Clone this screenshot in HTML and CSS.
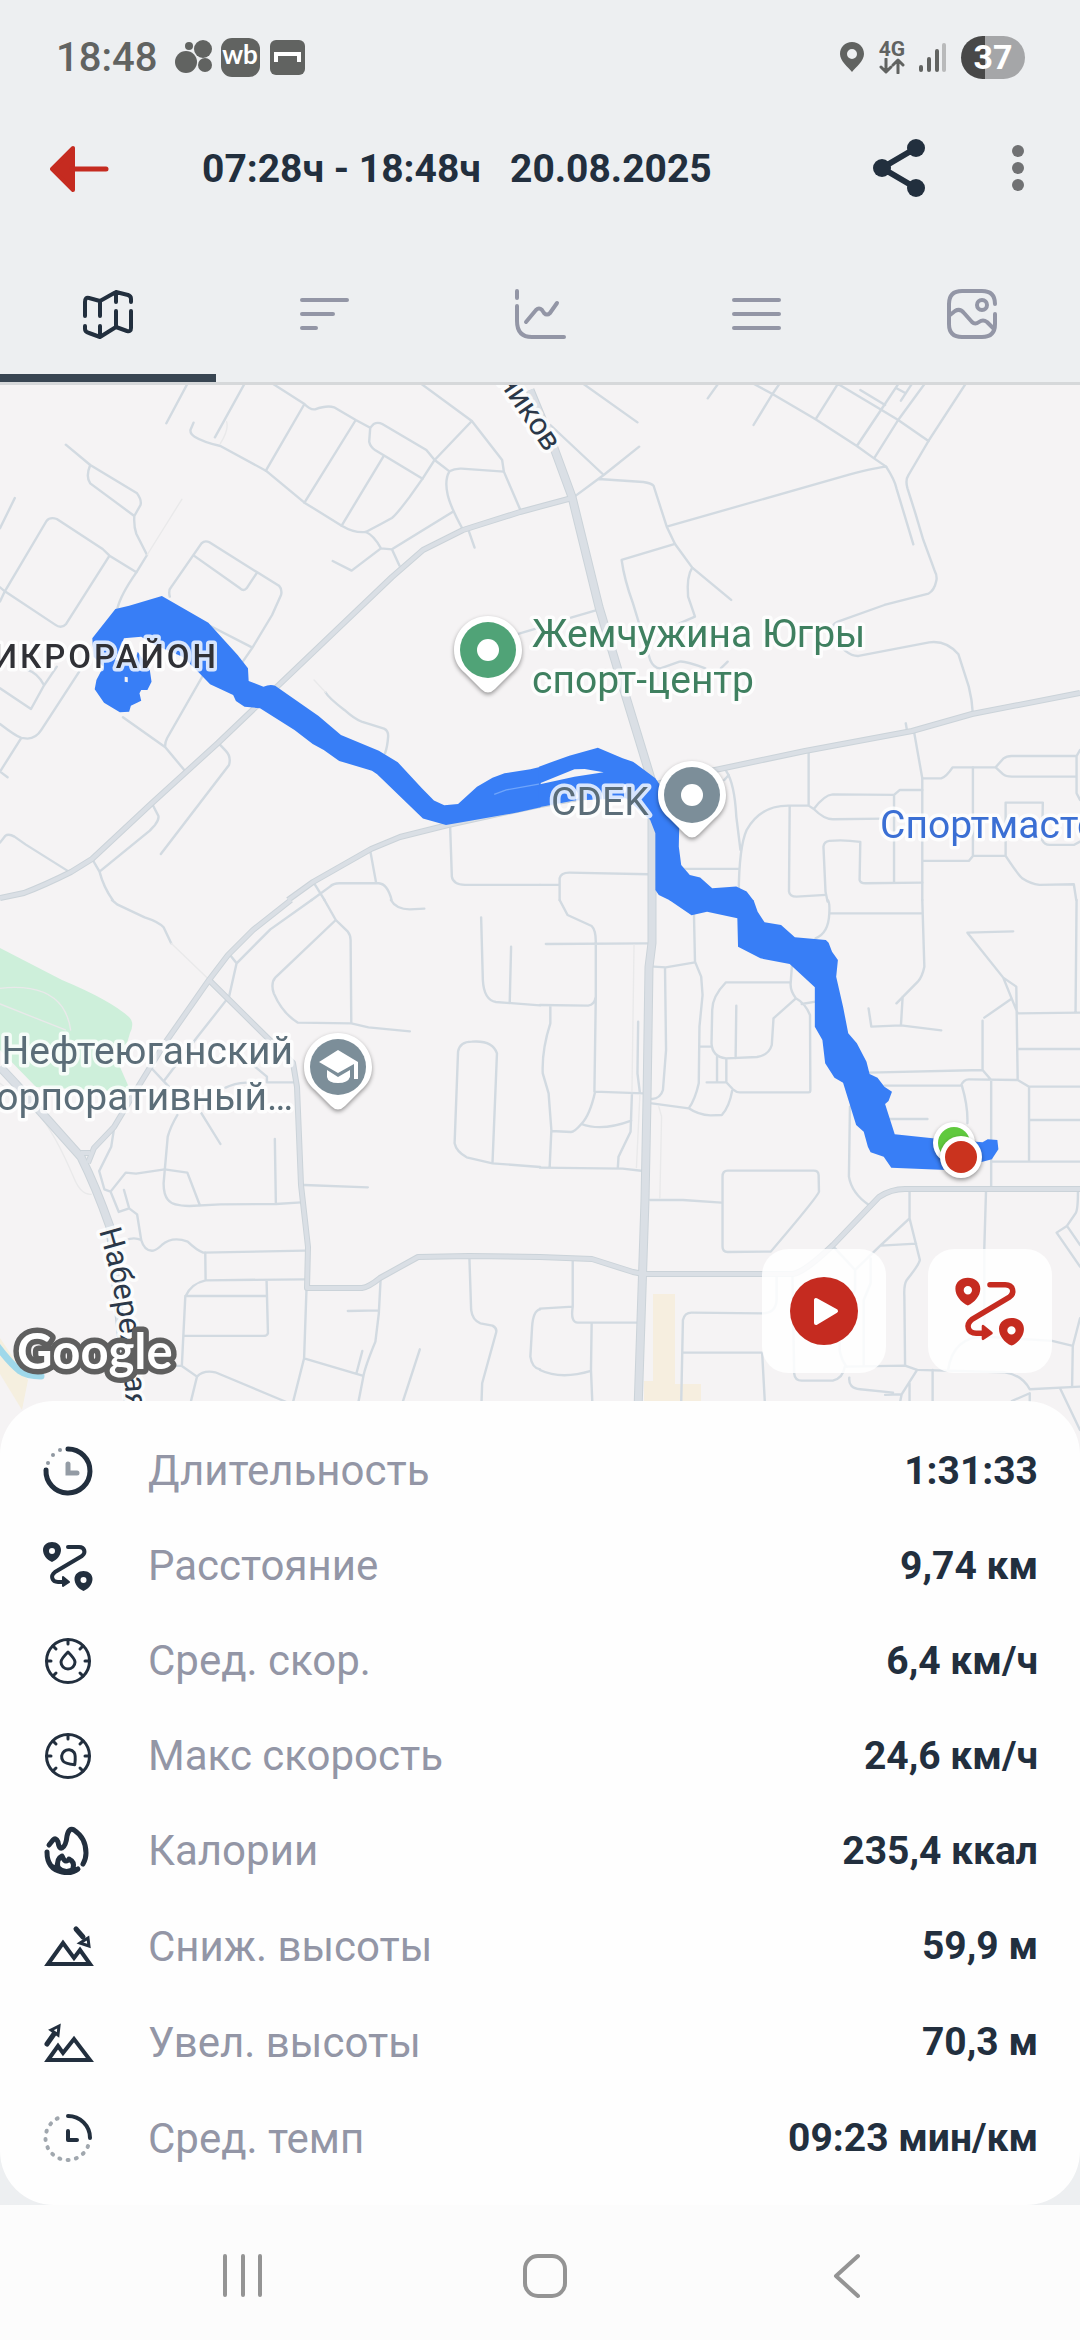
FILE: index.html
```html
<!DOCTYPE html>
<html lang="ru">
<head>
  <meta charset="utf-8">
  <meta name="viewport" content="width=device-width, initial-scale=1">
  <title>Маршрут</title>
  <link rel="stylesheet" href="styles.css">
</head>
<body>
  <!-- shared shapes -->
  <svg class="defs" aria-hidden="true">
    <symbol id="route" viewBox="0 0 52 52">
      <path fill="currentColor" fill-rule="evenodd" d="M10 2C5 2 1 5 1 10c0 5 4 10 9 12 5-2 9-7 9-12 0-5-4-8-9-8zm0 6a3 3 0 1 1 0 6 3 3 0 0 1 0-6zM41.500 31c-5 0-9 3-9 8 0 5 4 10 9 12 5-2 9-7 9-12 0-5-4-8-9-8zm0 6a3 3 0 1 1 0 6 3 3 0 0 1 0-6z"/>
      <path fill="none" stroke="currentColor" stroke-width="4" stroke-linecap="round" stroke-linejoin="round" d="M26 7H37C43 7 44 13 40 16L13 32C8 36 10 42 16 42H23"/>
      <path fill="currentColor" stroke="currentColor" stroke-width="2" stroke-linejoin="round" d="M21 37L27 42L21 46z"/>
    </symbol>
    <symbol id="gauge" viewBox="0 0 52 52">
      <circle cx="26" cy="26" r="21.500" fill="none" stroke="currentColor" stroke-width="3"/>
      <path fill="none" stroke="currentColor" stroke-width="3" stroke-linecap="round" d="M26 5V9M5 26H9M47 26H43M11 11L14 14M41 11L38 14M11 41L14 38M41 41L38 38"/>
    </symbol>
    <symbol id="pin" viewBox="0 0 80 90" overflow="visible">
      <path fill="#fff" d="M40 6C21 6 6 21 6 40C6 50 10 57 17 63L33 79Q40 86 47 79L63 63C70 57 74 50 74 40C74 21 59 6 40 6z"/>
      <circle cx="40" cy="40" r="28" fill="currentColor"/>
    </symbol>
  </svg>

  <header class="status-bar">
    <time class="clock">18:48</time>
    <svg class="status-apps" viewBox="0 0 132 44" aria-hidden="true">
      <g fill="#616361">
        <circle cx="11" cy="24" r="11"/><circle cx="28" cy="11" r="9"/><circle cx="14" cy="8" r="4"/><circle cx="30" cy="27" r="7"/>
        <rect x="46" width="39" height="39" rx="11"/>
        <rect x="95" y="2" width="35" height="35" rx="6"/>
      </g>
      <text class="wb" x="65" y="26" text-anchor="middle">wb</text>
      <path d="M101 24V16H124V24" fill="none" stroke="#fff" stroke-width="4"/>
    </svg>
    <div class="status-right">
      <svg width="26" height="32" viewBox="0 0 26 32" aria-hidden="true"><path fill="#616361" fill-rule="evenodd" d="M13 1C6 1 1 6 1 13C1 20 9 26 13 31C17 26 25 20 25 13C25 6 20 1 13 1zm0 7a5 5 0 1 1 0 10 5 5 0 0 1 0-10z"/></svg>
      <div class="network">
        <span>4G</span>
        <svg width="26" height="16" viewBox="0 0 26 16" aria-hidden="true"><path fill="none" stroke="#616361" stroke-width="3" stroke-linecap="round" stroke-linejoin="round" d="M7 1V13M2 9L7 14L12 9M19 15V3M14 7L19 2L24 7"/></svg>
      </div>
      <svg width="28" height="32" viewBox="0 0 28 32" aria-hidden="true"><g fill="none" stroke="#616361" stroke-width="4" stroke-linecap="round"><path d="M2 26V29M10 18V29M18 10V29"/><path stroke="#b9babb" d="M25 4V29"/></g></svg>
      <div class="battery">37</div>
    </div>
  </header>

  <div class="app-bar">
    <button class="icon-btn back" aria-label="Назад">
      <svg width="60" height="48" viewBox="0 0 60 48"><path fill="#c52b20" stroke="#c52b20" stroke-width="4" stroke-linejoin="round" d="M2 24L23 3V45z"/><path stroke="#c52b20" stroke-width="5" stroke-linecap="round" d="M22 24H56"/></svg>
    </button>
    <h1 class="title">07:28ч - 18:48ч &nbsp; 20.08.2025</h1>
    <button class="icon-btn share" aria-label="Поделиться">
      <svg width="52" height="60" viewBox="0 0 52 60"><path fill="none" stroke="#222f3e" stroke-width="6" d="M43 9L9 29L43 49"/><g fill="#222f3e"><circle cx="43" cy="9" r="9"/><circle cx="9" cy="29" r="9"/><circle cx="43" cy="49" r="9"/></g></svg>
    </button>
    <button class="icon-btn" aria-label="Меню">
      <svg width="24" height="48" viewBox="0 0 24 48"><g fill="#707173"><circle cx="12" cy="6" r="6"/><circle cx="12" cy="23" r="6"/><circle cx="12" cy="40" r="6"/></g></svg>
    </button>
  </div>

  <nav class="tabs">
    <button class="tab active" aria-label="Карта">
      <svg viewBox="0 0 52 52"><path d="M3 28V14Q3 9 7 10L18 13L34 4L46 7Q49 8 49 11V14M49 23V40Q49 44 45 43L34 39L18 49L7 45Q3 44 3 41V38M18 13V28M18 38V49M34 4V14M34 23V39"/></svg>
    </button>
    <button class="tab" aria-label="Список">
      <svg viewBox="0 0 52 52"><path d="M4 12H49M4 26H35M4 40H18"/></svg>
    </button>
    <button class="tab" aria-label="График">
      <svg viewBox="0 0 52 52"><path d="M3 3V10M3 18V33Q3 49 18 49H50M12 34L22 22Q25 19 28 22L30 25Q33 28 36 25L43 15"/></svg>
    </button>
    <button class="tab" aria-label="Данные">
      <svg viewBox="0 0 52 52"><path d="M4 12H49M4 26H49M4 40H49"/></svg>
    </button>
    <button class="tab" aria-label="Фото">
      <svg viewBox="0 0 52 52"><path d="M49 16Q49 3 36 3H16Q3 3 3 16V36Q3 49 16 49H36Q49 49 49 36V26M4 27L9 23Q14 20 18 25L26 34Q29 37 33 34Q37 31 41 34L48 41"/><circle cx="36" cy="17" r="5"/></svg>
    </button>
  </nav>

  <main class="map">
    <svg class="map-canvas" viewBox="0 385 1080 1076" preserveAspectRatio="xMidYMin slice" role="img" aria-label="Карта маршрута">
      <defs>
        <path id="street-2" d="M99 1231Q122 1305 126 1410"/>
      </defs>

      <!-- areas -->
      <path fill="#cdefda" d="M0 948L62 980Q110 1000 129 1017Q135 1023 130 1033L120 1067L131 1092L36 1087L0 1050z"/>
      <path fill="#f5efdf" d="M0 1338L28 1380L22 1410L0 1374z"/>
      <path fill="#f6eedf" d="M653 1294H675V1384H701V1410H644V1381H653z"/>
      <path fill="none" stroke="#9fd8ea" stroke-width="7" stroke-linecap="round" d="M-2 1347Q10 1363 20 1371Q27 1376 41 1376"/>

      <!-- north west -->
      <g class="minor" transform="translate(0 380) scale(.3444 .3333)">
        <path d="M550 0L483 130M716 0L624 172M562 128L553 150Q552 162 565 170Q590 186 640 198L772 272L884 368L992 437Q1030 460 1062 456L1106 432L1138 414Q1150 405 1190 350L1227 296L1262 240L1370 123"/>
        <path d="M775 0L884 72Q900 90 915 88Q950 75 970 82L1033 120L1075 143M1208 0L1370 123L1458 240L1463 275L1510 388M884 72L772 272M1033 120L884 368M1113 230L992 437"/>
        <path d="M1075 143L1085 132Q1097 125 1110 132L1238 210L1262 240L1305 274Q1320 265 1340 266L1463 275M1075 143L1072 185Q1075 200 1090 211L1227 296M1305 274Q1290 300 1300 345Q1308 380 1342 445"/>
        <path d="M1315 395L1138 508L1106 505L1021 572L966 543M1062 456Q1085 465 1106 505M1138 508L1160 557M1360 450L1378 503"/>
        <path d="M191 194L262 255L398 340Q412 360 408 375L390 408Q388 440 396 462L427 525L396 577Q350 645 341 685M262 255Q248 290 262 310L390 408M43 354L0 445"/>
        <path d="M0 665L14 634L135 423Q145 410 165 417L298 507L318 527L396 577M0 622L14 634L160 734Q178 748 192 732L318 527"/>
        <path d="M493 650Q488 630 498 620L585 490Q595 480 608 487L747 577L810 617Q820 628 816 645L790 705L733 803L705 845M563 527L697 625Q708 635 716 625L747 577M605 735L733 803"/>
        <path d="M80 870Q110 880 128 916L90 987L0 925M165 860L128 916M230 875L120 1050Q105 1075 80 1076L62 1074Q45 1068 0 1032M62 1074L0 1175L22 1192"/>
        <path d="M357 1012L480 1102Q478 1090 485 1075L590 885M480 1102L535 1170M633 1088L655 1112Q672 1130 665 1155L467 1422M442 1272L460 1308Q462 1320 450 1335L435 1352L289 1475M268 1438L289 1475Q300 1520 327 1560"/>
        <path d="M0 1388L15 1368Q25 1360 42 1370L75 1394L200 1475M945 937Q955 955 1000 990Q1030 1018 1050 1025L1115 1046Q1128 1052 1127 1070Q1125 1100 1118 1120"/>
        <path d="M1307 1340L1312 1490Q1315 1513 1350 1515L1568 1515M1075 1412L1092 1508M905 1560L958 1520Q968 1510 985 1510L1100 1510Q1125 1512 1137 1560M915 1515L942 1560M1500 763L1568 742"/>
        <path class="faint" d="M427 525L528 358M640 190Q665 150 658 125M912 900L945 937"/>
      </g>

      <!-- north east -->
      <g class="minor" transform="translate(540 380) scale(.3444 .3333)">
        <path d="M110 0L283 127M30 135L185 285L288 200M100 350L185 285M170 297L300 306Q325 310 330 318L368 440L392 492L442 563L555 660M368 440L900 283Q980 262 1005 260Q1030 300 1035 325L1084 493"/>
        <path d="M392 492L237 540Q245 600 270 670L320 840Q330 865 350 865L405 845Q420 842 480 865M525 865L545 845M442 563Q425 590 430 650L450 710L405 730M90 713L172 688"/>
        <path d="M525 0L487 55M600 0L675 42L800 118L920 198L970 235L1005 260M703 0L675 42L620 135M872 0L800 118M846 0L992 90L1040 120L1128 183M930 30L1002 75M1048 0L990 90L920 198M1125 0L1040 120L970 235M1087 0L1048 62M1035 25L1062 40"/>
        <path d="M1243 0L1128 183L1070 285Q1060 300 1067 325L1090 400L1113 480L1145 570Q1155 590 1150 605Q1145 630 1128 641L1000 675L865 725Q840 735 850 770Q890 830 925 828L1130 787Q1180 780 1215 823L1245 920Q1255 960 1257 1003"/>
        <path d="M1062 1030L1065 1048M1086 1055L1110 1195L1165 1195Q1180 1190 1198 1162L1323 1162L1345 1136Q1355 1128 1370 1128L1558 1128L1568 1110M1323 1162L1345 1183Q1352 1190 1370 1190L1558 1190M1558 1128L1558 1240L1568 1260"/>
        <path d="M1110 1195V1560M1257 1162V1428M1113 1443L1245 1443L1257 1428L1352 1428Q1385 1480 1400 1495Q1425 1512 1450 1515L1550 1513L1557 1560M1352 1428V1268H1460L1458 1380Q1465 1395 1480 1395L1550 1395L1568 1385"/>
        <path d="M780 1120V1277L725 1277Q640 1275 600 1350Q578 1400 577 1540M725 1277L723 1535Q725 1550 745 1550L830 1545M780 1277L795 1287Q825 1245 850 1243L1028 1245L1045 1230H1110M795 1287Q825 1318 850 1318L1000 1316M1028 1245V1508"/>
        <path d="M835 1565L829 1535L823 1400Q825 1385 840 1383Q880 1378 930 1386L928 1500Q930 1510 945 1510L1110 1508M540 1172Q565 1210 570 1310L582 1410M548 1185L535 1200M415 1467H577M0 1515H57M57 1560V1495Q60 1478 85 1478L315 1483"/>
      </g>

      <!-- south west -->
      <g class="minor" transform="translate(0 900) scale(.3444 .3333)">
        <path d="M325 0L340 13L420 52Q460 65 475 82L497 130M905 0L785 88L687 190L665 290L570 415L478 540M668 165L687 190"/>
        <path d="M942 0L975 60L1010 95Q1018 105 1018 120L1020 370M975 60L800 232Q785 250 795 280Q820 340 865 368L1020 370L1070 382L1190 394M1135 0Q1150 28 1190 28L1232 26"/>
        <path d="M1397 52L1402 240Q1405 300 1440 306L1568 316M1484 140L1480 310M1330 455L1320 730Q1325 755 1355 772L1430 790L1568 801M1330 455Q1335 425 1370 425Q1430 420 1443 460L1430 790"/>
        <path d="M883 855L1068 862M798 717L801 912M875 907L801 912L640 913L550 918Q500 918 488 900Q475 885 475 850L487 710Q495 680 515 645M585 640L640 732M440 505L490 560"/>
        <path d="M332 680L323 740L288 813L303 868L321 875L365 818L395 821L478 808L544 818L580 915M321 875L345 936L375 925L360 870M375 925L398 943L410 1020Q420 1055 445 1052Q455 1050 470 1035Q500 1008 545 1025Q570 1050 590 1058L885 1052M365 1020Q390 1010 410 1020"/>
        <path d="M596 1058L597 1141L885 1138M597 1141Q555 1150 538 1190L528 1398L572 1430L553 1510M538 1188H774M774 1141L778 1300Q775 1308 765 1308H532M528 1398H450M572 1430Q590 1410 625 1417L840 1510"/>
        <path d="M890 1165L883 1375L850 1510M883 1375L1055 1428M1052 1353L1035 1420M1105 1140L1100 1240L1090 1325Q1060 1400 1055 1430L1040 1510M1010 1233L1100 1231M1219 1348L1168 1510"/>
        <path d="M1363 1075L1368 1230Q1372 1262 1395 1270L1430 1277Q1445 1285 1440 1300L1400 1450L1398 1510M1568 1228Q1548 1232 1545 1280L1540 1370Q1545 1405 1568 1408M775 547H855M740 500L775 530V547M655 563Q680 550 715 548"/>
        <path class="faint" d="M497 130L608 240M0 550L110 640Q160 700 215 835Q235 885 265 883M0 265Q130 250 180 320Q200 350 205 390M0 312L190 390"/>
      </g>

      <!-- south east -->
      <g class="minor" transform="translate(540 900) scale(.3444 .3333)">
        <path d="M57 0L80 45L150 78Q162 90 162 125L162 290Q158 315 140 317L0 315M17 132L315 130M162 290L158 575L300 580M30 317L30 370Q5 450 8 520L25 580L33 690L28 803M33 693L90 696Q100 696 120 672Q145 645 160 575M120 672Q180 695 265 662M267 580L263 695L228 770L226 803M285 365L283 520L290 578M0 803L240 806L300 813"/>
        <path d="M447 40L450 185L468 230L472 285L463 380L461 550Q450 600 432 625L325 610M330 200L365 202L450 187M363 205L366 450L357 570Q350 595 325 597M432 625Q460 645 495 646L528 645Q550 620 558 572M463 440H498"/>
        <path d="M728 247H540Q500 290 500 330L498 430Q500 470 540 475L630 471Q665 465 673 435L678 355L743 295M570 317L568 475M514 470V547M541 475V547L560 568Q570 577 580 577H780Q785 577 785 570L784 345Q770 310 743 295Q725 270 728 247L732 190M484 547H541M760 312L800 305"/>
        <path d="M835 0Q842 5 840 40Q838 100 800 115M840 40H1110M1110 0L1116 200Q1110 230 1097 245L1035 310M1053 290L1048 376M954 325L962 380L1048 376L1165 391"/>
        <path d="M1374 94L1241 98L1345 233L1383 260L1387 540L1420 560H1568M1345 233L1387 340L1568 338M1290 353L1368 297M1558 0L1555 338M1387 447H1568M1285 362V510L1310 540M955 518L1285 510M1000 557H1222Q1230 538 1245 538L1387 540M1225 557Q1243 620 1241 670M1310 540V865M1420 560V785M1420 660H1568M1310 785H1568M1015 657H1125"/>
        <path d="M900 620L897 830Q905 880 955 915M320 900L415 900L527 908M530 830Q530 812 545 812H795Q808 812 809 825L810 875Q808 888 670 1055L545 1056Q530 1055 530 1040z"/>
        <path d="M1073 875V955L985 1040L915 1110L852 1040M915 1110V1170L870 1250V1350Q875 1380 890 1400M960 1075V1150L940 1200V1395M1073 955L1103 1080Q1100 1095 1065 1140Q1056 1155 1058 1190L1060 1395M990 1037L1092 1031M1295 875L1290 1047V1300"/>
        <path d="M1562 875Q1562 930 1555 940L1530 978L1500 998L1568 1100M1530 978L1568 1035M95 1080V1220L0 1226M95 1220Q88 1268 110 1268H280M150 1268L148 1410L152 1510M0 1410Q60 1440 148 1413"/>
        <path d="M410 1510L415 1260Q420 1238 440 1238L645 1240Q685 1240 687 1200V1130M415 1358H645L653 1510M733 1130L738 1420Q740 1442 760 1442H850Q880 1435 885 1400L1060 1397L1095 1410L1350 1417Q1400 1425 1422 1468L1568 1460"/>
        <path d="M898 1433Q895 1465 930 1468L1025 1478M1002 1485L1050 1483L1095 1410M1050 1483L1045 1510M1073 1450V1510M1140 1410V1510M1370 1503L1422 1480V1510M1510 1465L1568 1590M1185 1410Q1200 1310 1290 1310L1487 1323L1547 1338L1545 1460M1547 1338L1568 1255"/>
        <path class="faint" d="M273 135L267 575M345 620L353 650L348 895M290 585L280 803"/>
      </g>

      <!-- main streets -->
      <g fill="none" stroke-linejoin="round">
        <path class="major edge" d="M0 898L24 893Q45 885 71 872L92 859L152 803L218 743L392 577L423 550L463 530L520 512L572 498M288 900L313 882L371 849L400 837L448 825L540 805L652 785L715 770L805 751L912 731L972 714L1080 693"/>
        <path class="major edge" d="M291 900L253 930L228 955L209 980L165 1043L138 1087L114 1127L94 1148L88 1163M81 1153H90M209 980L293 1063L297 1087L301 1185L308 1247L307 1288H362Q369 1287 380 1278L418 1257L469 1256L540 1257L592 1259L633 1272L643 1274H793Q805 1272 833 1245L879 1197Q891 1189 905 1189H1080"/>
        <path class="major wide edge" d="M530 390L554 448L572 497L599 607L626 697L652 782L652 943L649 967L647 1100L645 1200L638 1410M0 1067L15 1083L81 1157Q96 1187 110 1227L128 1400"/>
        <path class="major" d="M0 898L24 893Q45 885 71 872L92 859L152 803L218 743L392 577L423 550L463 530L520 512L572 498M288 900L313 882L371 849L400 837L448 825L540 805L652 785L715 770L805 751L912 731L972 714L1080 693"/>
        <path class="major" d="M291 900L253 930L228 955L209 980L165 1043L138 1087L114 1127L94 1148L88 1163M81 1153H90M209 980L293 1063L297 1087L301 1185L308 1247L307 1288H362Q369 1287 380 1278L418 1257L469 1256L540 1257L592 1259L633 1272L643 1274H793Q805 1272 833 1245L879 1197Q891 1189 905 1189H1080"/>
        <path class="major wide" d="M530 390L554 448L572 497L599 607L626 697L652 782L652 943L649 967L647 1100L645 1200L638 1410M0 1067L15 1083L81 1157Q96 1187 110 1227L128 1400"/>
      </g>

      <!-- recorded track -->
      <g class="track">
        <g transform="translate(0 380) scale(.3444 .3333)">
          <path fill-rule="evenodd" d="M268 775L335 687L375 677L470 648L605 728L690 825L720 865L722 903L765 920Q785 912 800 918L925 1008L990 1065L1100 1112L1155 1147L1225 1225L1260 1262L1290 1276L1330 1272L1385 1220L1430 1193L1465 1180L1540 1168L1570 1160V1282L1505 1297L1370 1322L1295 1335L1228 1316L1095 1183L1080 1172L985 1143L940 1110L908 1092L855 1050L755 985L710 980L685 963L677 945L610 913L575 875L530 830L450 795L410 770L360 775L335 840L390 850L400 815L435 870L440 905L428 930L410 930L405 940L410 962L380 977L375 995L348 997L302 968L275 928L280 900L300 860L272 830zM362 890V905L371 907V892z"/>
          <path fill="none" stroke="#6fa5fb" stroke-width="4" d="M1435 1243L1470 1230L1568 1212"/>
        </g>
        <g transform="translate(540 380) scale(.3444 .3333)">
          <path fill-rule="evenodd" d="M-3 1160L85 1127L168 1103L240 1135L270 1145L335 1195L405 1300L403 1400L410 1455L435 1485L465 1493L500 1525L570 1520L600 1535L620 1562H378L345 1545L335 1530V1360L320 1320L250 1255L100 1262L-3 1282zM0 1210L100 1168L130 1167L185 1177L100 1190L0 1213z"/>
        </g>
        <g transform="translate(540 900) scale(.3444 .3333)">
          <path d="M620 0L632 35L652 67L700 75L740 112L830 120L838 128L848 155L865 180L860 230L880 320L895 400L920 430L948 485L957 522L980 533L1000 560L1022 575L1012 603L1002 612L1030 703L1140 715L1285 727L1300 718L1328 720L1331 748L1312 778L1285 785L1180 810L1020 803L998 770L960 757L952 740L940 695L918 675L880 548L855 533L828 490L820 420L798 380V262L725 192L640 175L575 140L573 55L485 35L440 46L375 0z"/>
        </g>
      </g>

      <!-- places -->
      <g class="marker">
        <use href="#pin" x="448" y="610" width="80" height="90" color="#50a377"/>
        <circle cx="488" cy="650" r="11" fill="#fff"/>
        <use href="#pin" x="652" y="755" width="80" height="90" color="#7c8e99"/>
        <circle cx="692" cy="795" r="11" fill="#fff"/>
        <use href="#pin" x="298" y="1027" width="80" height="90" color="#7c8e99"/>
        <path fill="#fff" d="M338 1050L358 1062V1079H354V1064L338 1073L319 1062zM327 1070L338 1077L350 1070V1077Q348 1083 338 1083Q328 1083 327 1077z"/>
      </g>
      <g class="marker">
        <circle cx="954" cy="1143" r="21" fill="#fff"/><circle cx="954" cy="1143" r="16" fill="#60c93e"/>
      </g>
      <g class="marker">
        <circle cx="961" cy="1157" r="21" fill="#fff"/><circle cx="961" cy="1157" r="16" fill="#ca331e"/>
      </g>

      <g class="label">
        <text class="sport" x="532" y="647">Жемчужина Югры</text>
        <text class="sport" x="532" y="693">спорт-центр</text>
        <text class="place" x="551" y="815">CDEK</text>
        <text class="shop" x="880" y="838">Спортмастер</text>
        <text class="place" x="293" y="1064" text-anchor="end">Нефтеюганский</text>
        <text class="place" x="293" y="1110" text-anchor="end">корпоративный…</text>
        <text class="district" x="219" y="668" text-anchor="end">МИКРОРАЙОН</text>
        <text class="street" text-anchor="end" transform="translate(546 453) rotate(56)">Нефтяников</text>
        <text class="street"><textPath href="#street-2">Набережная</textPath></text>
      </g>
      <text class="google" x="17" y="1369">Google</text>
    </svg>

    <div class="map-controls">
      <button class="map-btn" aria-label="Воспроизвести">
        <svg width="68" height="68" viewBox="0 0 68 68"><circle cx="34" cy="34" r="34" fill="#c52b20"/><path fill="#fff" stroke="#fff" stroke-width="4" stroke-linejoin="round" d="M26 23V46L46 34z"/></svg>
      </button>
      <button class="map-btn" aria-label="Маршрут">
        <svg width="72" height="72"><use href="#route"/></svg>
      </button>
    </div>
  </main>

  <section class="sheet">
    <dl class="stats">
      <div class="stat">
        <dt><svg class="stat-icon" viewBox="0 0 52 52"><path class="line" stroke-width="5" d="M26 4A22 22 0 1 1 4 25"/><g fill="#8f98a1"><circle cx="6" cy="18" r="2"/><circle cx="11" cy="10" r="2"/><circle cx="18" cy="5" r="2"/></g><path fill="none" stroke="#939ba4" stroke-width="5" stroke-linecap="round" d="M26 19V28H35"/></svg>Длительность</dt>
        <dd>1:31:33</dd>
      </div>
      <div class="stat">
        <dt><svg class="stat-icon"><use href="#route"/></svg>Расстояние</dt>
        <dd>9,74 км</dd>
      </div>
      <div class="stat">
        <dt><svg class="stat-icon" viewBox="0 0 52 52"><use href="#gauge"/><path class="line" stroke-width="3" d="M26 17Q19 24 19 27A7 7 0 0 0 33 27Q33 24 26 17z"/></svg>Сред. скор.</dt>
        <dd>6,4 км/ч</dd>
      </div>
      <div class="stat">
        <dt><svg class="stat-icon" viewBox="0 0 52 52"><use href="#gauge"/><path class="line" stroke-width="3" transform="rotate(142 26 26)" d="M26 15Q19 22 19 25A7 7 0 0 0 33 25Q33 22 26 15z"/></svg>Макс скорость</dt>
        <dd>24,6 км/ч</dd>
      </div>
      <div class="stat">
        <dt><svg class="stat-icon" viewBox="0 0 52 52"><path class="line" stroke-width="5" d="M7 20L11 15Q14 12 16 17Q17 24 20 23Q24 21 25 11Q27 2 32 5Q44 13 44 28Q44 34 41 39M5 27Q5 44 20 47Q30 49 36 44M16 43Q14 34 20 31Q22 36 24 36Q26 36 27 34Q33 37 31 43"/><path fill="currentColor" d="M9 39L18 41Q24 47 32 41L38 44Q30 50 20 49Q12 47 9 39z"/></svg>Калории</dt>
        <dd>235,4 ккал</dd>
      </div>
      <div class="stat tall">
        <dt><svg class="stat-icon" viewBox="0 0 52 52"><path class="line sharp" stroke-width="4" d="M6 44L21 23L32 38L38 30L48 44z"/><path class="line" stroke-width="5" d="M34 9L41 17"/><path class="line sharp" stroke-width="3" d="M38 23L46 18L47 26z"/></svg>Сниж. высоты</dt>
        <dd>59,9 м</dd>
      </div>
      <div class="stat tall">
        <dt><svg class="stat-icon" viewBox="0 0 52 52"><path class="line sharp" stroke-width="4" d="M6 44L16 30L21 37L32 23L48 44z"/><path class="line" stroke-width="5" d="M5 28L12 18"/><path class="line sharp" stroke-width="3" d="M9 14L17 10L16 19z"/></svg>Увел. высоты</dt>
        <dd>70,3 м</dd>
      </div>
      <div class="stat tall">
        <dt><svg class="stat-icon" viewBox="0 0 52 52"><path fill="none" stroke="#a0a7ae" stroke-width="4" stroke-linecap="round" stroke-dasharray="1 7.400" d="M46 34A22 22 0 1 1 19 5"/><path class="line" stroke-width="4" d="M26 4A22 22 0 0 1 48 26M26 19V28H35"/></svg>Сред. темп</dt>
        <dd>09:23 мин/км</dd>
      </div>
    </dl>
  </section>

  <footer class="system-nav">
    <button class="icon-btn" aria-label="Недавние"><svg width="46" height="46" viewBox="0 0 46 46"><path d="M5 3V42M23 3V42M40 3V42"/></svg></button>
    <button class="icon-btn" aria-label="Домой"><svg width="46" height="46" viewBox="0 0 46 46"><rect x="3" y="3" width="40" height="40" rx="13"/></svg></button>
    <button class="icon-btn" aria-label="Назад"><svg width="46" height="46" viewBox="0 0 46 46"><path d="M34 3L12 23L34 43"/></svg></button>
  </footer>
</body>
</html>
```
FILE: styles.css
```css
/* Track details screen */
* {
  box-sizing: border-box;
}
body {
  margin: 0;
  min-height: 100vh;
  display: flex;
  flex-direction: column;
  background-color: #edeff1;
  color: #222f3e;
  font-family: Roboto, "Noto Sans", sans-serif;
}
button {
  border: none;
  background: none;
  padding: 0;
  cursor: pointer;
  color: inherit;
}
svg {
  display: block;
}
.defs {
  position: absolute;
  width: 0;
  height: 0;
}

/* Status bar */
.status-bar {
  display: flex;
  align-items: center;
  height: 114px;
  padding: 0 55px 0 56px;
  color: #616361;
}
.clock {
  font-size: 40px;
  font-weight: 500;
  margin-right: 18px;
}
.status-apps {
  width: 132px;
  height: 44px;
  margin-top: 5px;
}
.wb {
  fill: #fff;
  font-family: Lato, sans-serif;
  font-size: 26px;
  font-weight: 700;
}
.status-right {
  display: flex;
  align-items: center;
  gap: 14px;
  margin-left: auto;
}
.network {
  width: 26px;
  display: flex;
  flex-direction: column;
  align-items: center;
  font-size: 21px;
  font-weight: 700;
  line-height: 18px;
}
.battery {
  width: 64px;
  height: 43px;
  border-radius: 22px;
  background: linear-gradient(90deg, #484848 37%, #a5a6a8 37%);
  color: #fff;
  font-size: 34px;
  font-weight: 700;
  line-height: 43px;
  text-align: center;
}

/* Title bar */
.app-bar {
  display: flex;
  align-items: center;
  height: 110px;
  padding: 0 50px;
}
.title {
  flex: 1;
  margin: 0 0 0 92px;
  font-size: 39px;
  font-weight: 700;
}
.share {
  margin-right: 81px;
}

/* Tabs */
.tabs {
  display: flex;
  height: 161px;
  border-bottom: 3px solid #d6d8da;
}
.tab {
  flex: 1;
  display: flex;
  justify-content: center;
  align-items: center;
  padding-top: 30px;
  border-bottom: 8px solid transparent;
  color: #9396a6;
}
.tab.active {
  color: #222f3e;
  border-bottom-color: #384552;
}
.tab svg {
  width: 52px;
  height: 52px;
  fill: none;
  stroke: currentColor;
  stroke-width: 4;
  stroke-linecap: round;
  stroke-linejoin: round;
}

/* Map */
.map {
  position: relative;
  flex: 1;
  min-height: 480px;
  background-color: #f5f3f4;
  overflow: hidden;
}
.map-canvas {
  position: absolute;
  width: 100%;
  height: 100%;
}
.minor {
  fill: none;
  stroke: #d2dae1;
  stroke-width: 7;
  stroke-linecap: round;
  stroke-linejoin: round;
}
.faint {
  stroke: #e9e9ea;
  stroke-width: 4;
}
.major {
  stroke: #dadfe5;
  stroke-width: 4;
}
.major.edge {
  stroke: #cbd3d9;
  stroke-width: 6;
}
.major.wide {
  stroke-width: 7;
}
.major.wide.edge {
  stroke-width: 9;
}
.track {
  fill: #387ef6;
}
.marker {
  filter: drop-shadow(0 2px 2px rgba(0, 0, 0, 0.4));
}
.label text {
  font-size: 39px;
  paint-order: stroke;
  stroke: rgba(255, 255, 255, 0.8);
  stroke-width: 7px;
  stroke-linejoin: round;
}
.label .sport {
  fill: #3f8060;
}
.label .place {
  fill: #5b6d78;
}
.label .shop {
  fill: #3b6fd4;
}
.label .district {
  fill: #303136;
  font-size: 33px;
  font-weight: 500;
  letter-spacing: 3px;
}
.label .street {
  fill: #2b3849;
  font-size: 31px;
}
.google {
  fill: #fff;
  font-family: Lato, sans-serif;
  font-size: 49px;
  font-weight: 700;
  paint-order: stroke;
  stroke: #5f5f5f;
  stroke-width: 11px;
  stroke-linejoin: round;
}
.map-controls {
  position: absolute;
  right: 28px;
  bottom: 88px;
  display: flex;
  gap: 42px;
}
.map-btn {
  display: flex;
  align-items: center;
  justify-content: center;
  width: 124px;
  height: 124px;
  border-radius: 26px;
  background-color: rgba(255, 255, 255, 0.85);
  color: #c52b20;
}

/* Stats sheet, its top corners lie over the map */
.sheet {
  position: relative;
  margin-top: -60px;
  background: linear-gradient(transparent 50%, #edeff1 50%);
}
.stats {
  margin: 0;
  padding: 22px 42px 19px;
  border-radius: 54px;
  background-color: #fefefe;
}
.stat {
  display: flex;
  align-items: center;
  justify-content: space-between;
  height: 95px;
}
.stat.tall {
  height: 96px;
}
.stat dt {
  display: flex;
  align-items: center;
  gap: 54px;
  color: #9396a6;
  font-size: 42px;
}
.stat dd {
  margin: 0;
  font-size: 39px;
  font-weight: 700;
}
.stat-icon {
  width: 52px;
  height: 52px;
  color: #222f3e;
}
.line {
  fill: none;
  stroke: currentColor;
  stroke-linecap: round;
  stroke-linejoin: round;
}
.line.sharp {
  stroke-linejoin: miter;
}

/* System navigation */
.system-nav {
  display: flex;
  height: 135px;
  padding: 0 82px 0 92px;
  background-color: #fcfcfc;
}
.system-nav .icon-btn {
  flex: 1;
  display: flex;
  align-items: center;
  justify-content: center;
  padding-top: 6px;
}
.system-nav svg {
  fill: none;
  stroke: #949494;
  stroke-width: 4;
  stroke-linecap: round;
  stroke-linejoin: round;
}
```
